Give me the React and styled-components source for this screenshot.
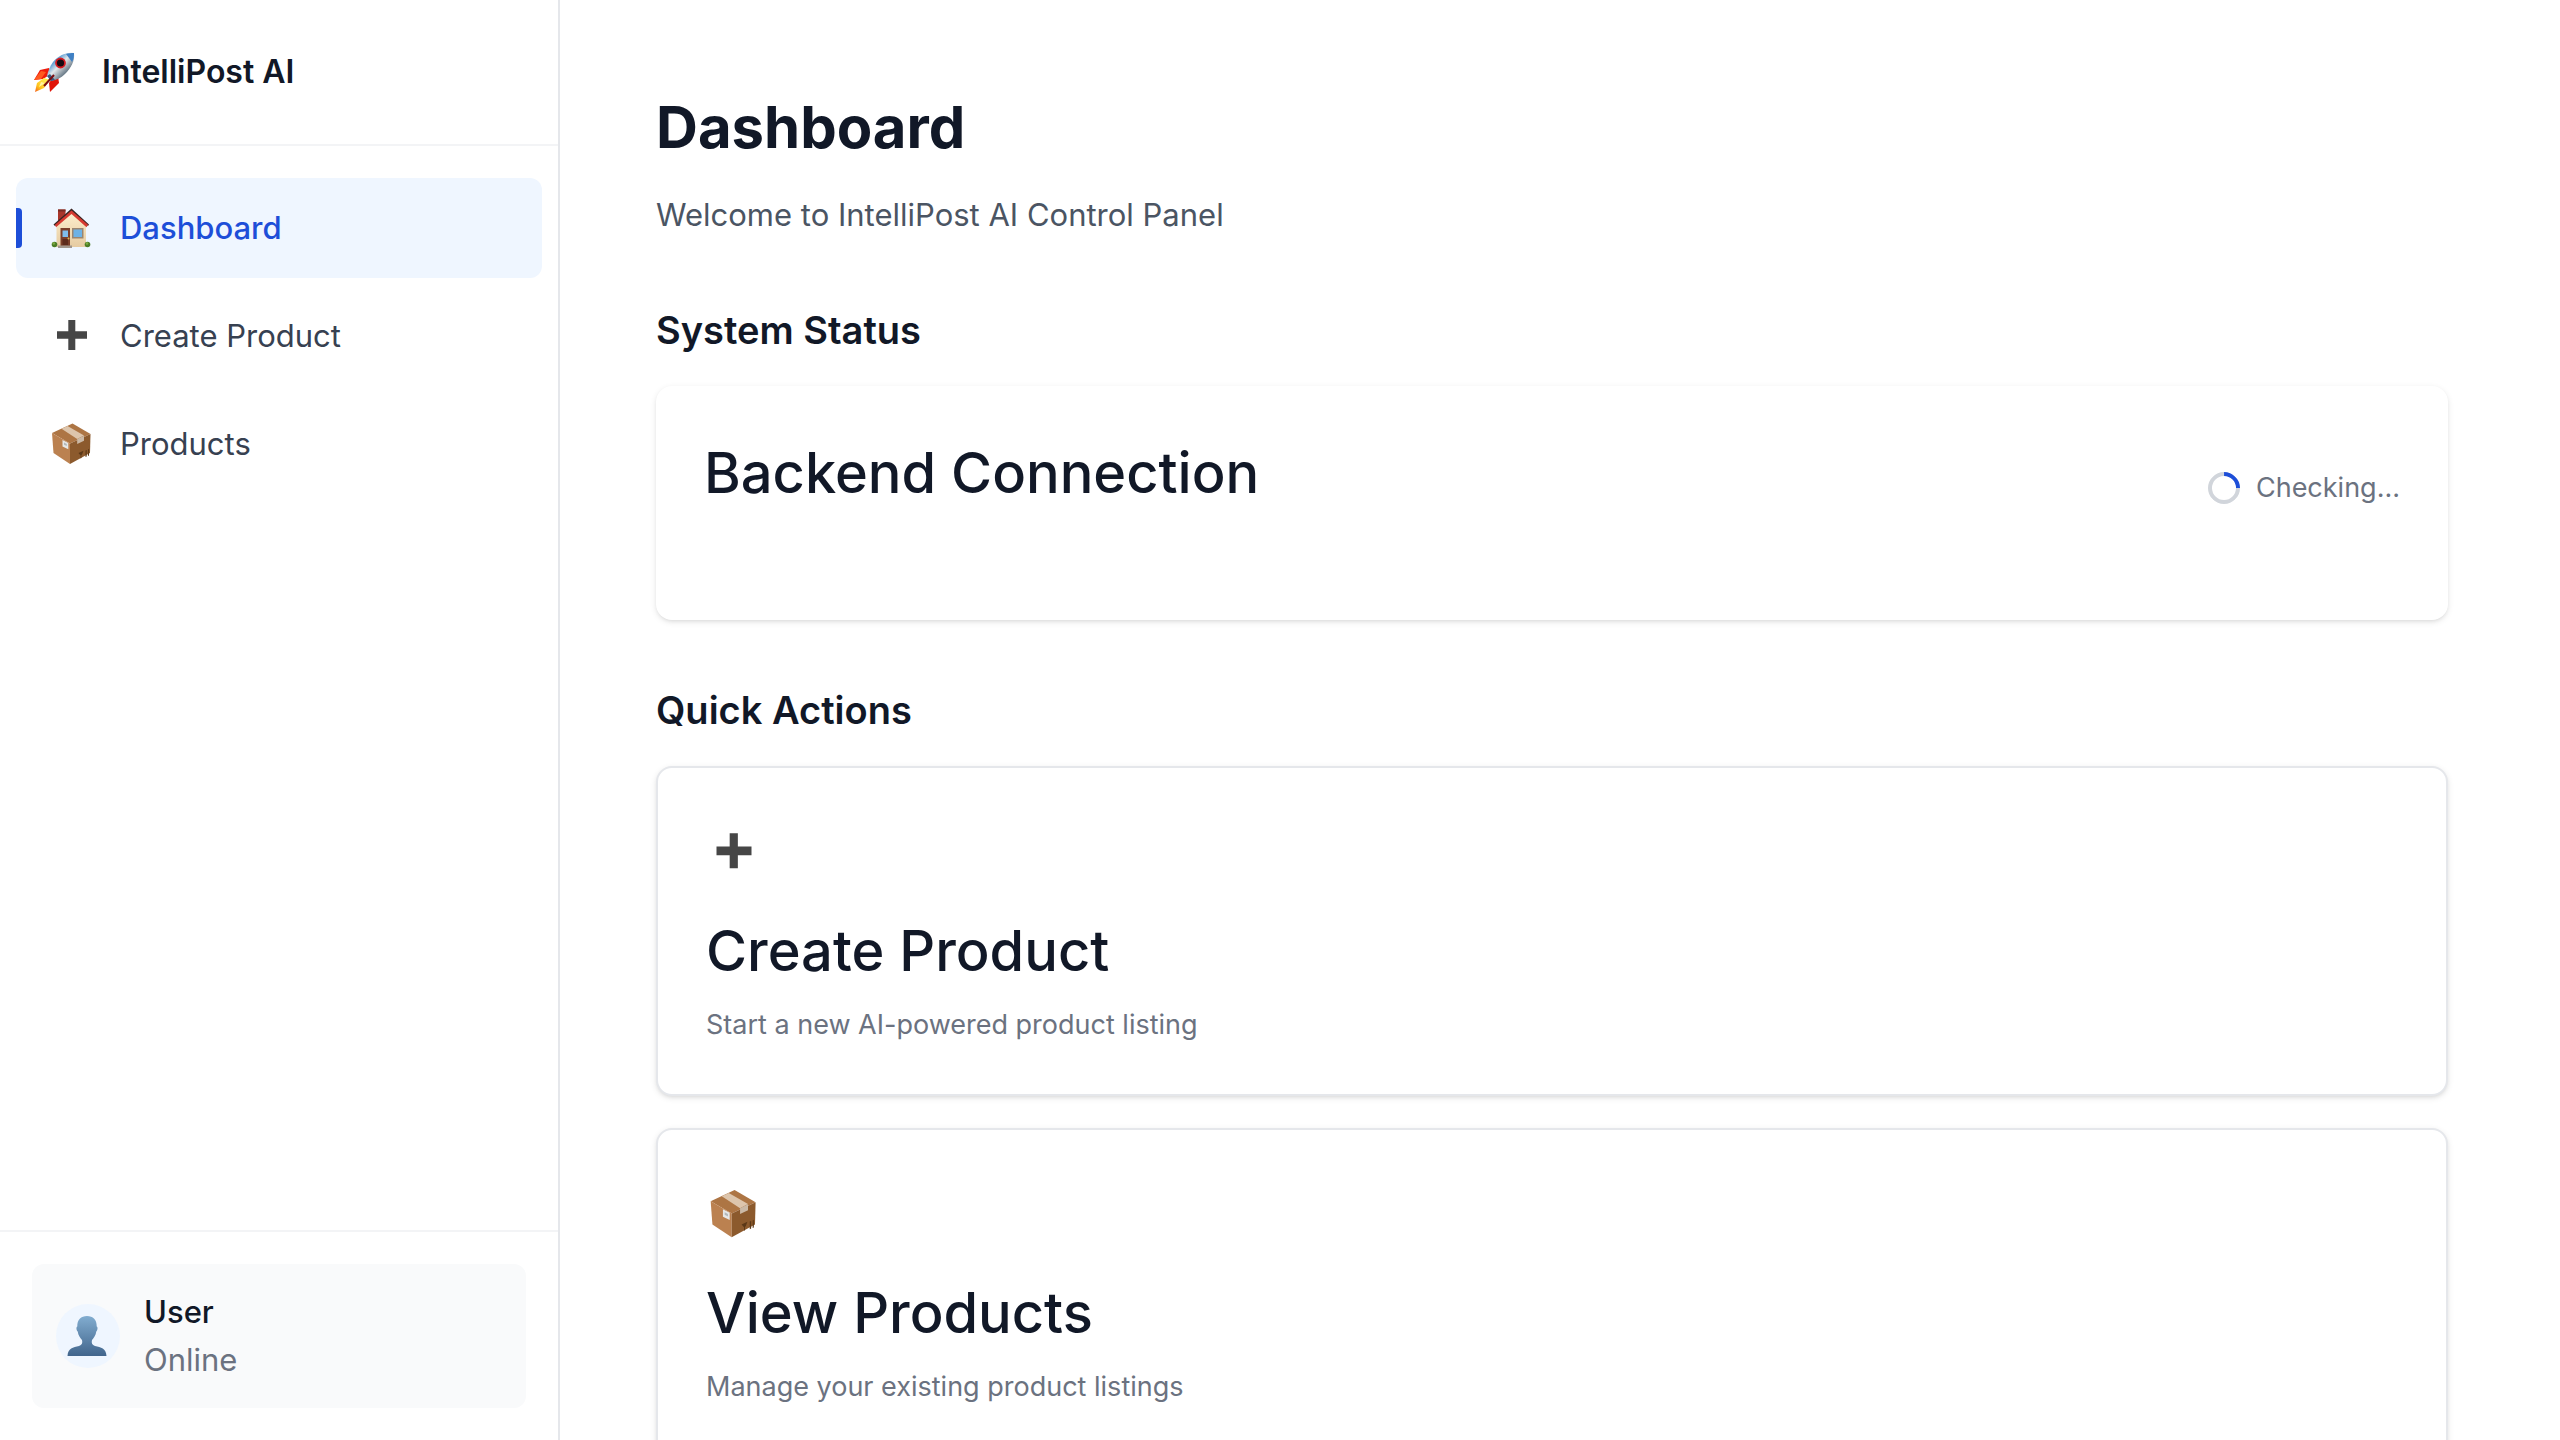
import React from "react";
import styled, { createGlobalStyle } from "styled-components";

const GlobalStyle = createGlobalStyle`
  *, *::before, *::after { box-sizing: border-box; }
  html, body, #root { height: 100%; }
  body {
    margin: 0;
    overflow: hidden;
    background: #ffffff;
    color: #111827;
    font-family: Inter, "Liberation Sans", sans-serif;
    font-size: 31px;
    line-height: 48px;
    -webkit-font-smoothing: antialiased;
  }
  h1, h2, h3, p { margin: 0; }
  a { color: inherit; text-decoration: none; }
`;

const Shell = styled.div`
  display: flex;
  height: 100vh;
`;

const Sidebar = styled.aside`
  display: flex;
  flex-direction: column;
  flex: 0 0 560px;
  border-right: 2px solid #e5e7eb;
`;

const Brand = styled.header`
  display: flex;
  align-items: center;
  gap: 26px;
  padding: 48px 32px;
  border-bottom: 2px solid #f3f4f6;
`;

const BrandName = styled.span`
  font-size: 32px;
  font-weight: 600;
`;

const Nav = styled.nav`
  display: flex;
  flex: 1;
  flex-direction: column;
  gap: 8px;
  padding: 32px 16px;
`;

const NavLink = styled.a`
  position: relative;
  display: flex;
  align-items: center;
  gap: 24px;
  padding: 25px 32px;
  border-radius: 12px;
  line-height: 50px;
  font-weight: ${(p) => (p.$active ? 500 : 400)};
  color: ${(p) => (p.$active ? "#1d4ed8" : "#374151")};
  background: ${(p) => (p.$active ? "#eff6ff" : "transparent")};

  &::before {
    content: "";
    display: ${(p) => (p.$active ? "block" : "none")};
    position: absolute;
    left: 0;
    top: 30px;
    width: 6px;
    height: 40px;
    border-radius: 0 4px 4px 0;
    background: #1d4ed8;
  }
`;

const SidebarFooter = styled.footer`
  padding: 32px;
  border-top: 2px solid #f3f4f6;
`;

const UserCard = styled.div`
  display: flex;
  align-items: center;
  gap: 24px;
  padding: 24px;
  border-radius: 12px;
  background: #f9fafb;
`;

const Avatar = styled.div`
  display: grid;
  place-items: center;
  width: 64px;
  height: 64px;
  border-radius: 50%;
  background: #eff6ff;
`;

const UserName = styled.p`
  font-weight: 500;
`;

const UserState = styled.p`
  color: #6b7280;
`;

const Main = styled.main`
  flex: 1;
  min-width: 0;
  overflow: hidden;
  padding: 96px 112px 96px 96px;
`;

const PageTitle = styled.h1`
  margin-bottom: 32px;
  font-size: 58px;
  font-weight: 700;
  line-height: 62px;
`;

const PageLead = styled.p`
  line-height: 50px;
  color: #4b5563;
`;

const Section = styled.section`
  margin-top: 64px;
`;

const SectionTitle = styled.h2`
  margin-bottom: 30px;
  font-size: 38px;
  font-weight: 600;
  line-height: 52px;
`;

const cardShadow = "0 2px 6px rgba(0, 0, 0, 0.1), 0 2px 4px -2px rgba(0, 0, 0, 0.1)";

const StatusCard = styled.div`
  padding: 48px;
  border-radius: 16px;
  background: #ffffff;
  box-shadow: ${cardShadow};
`;

const StatusRow = styled.div`
  display: flex;
  align-items: center;
  justify-content: space-between;
  margin-bottom: 30px;
`;

const CardTitle = styled.h3`
  margin-bottom: ${(p) => (p.$spacious ? "30px" : "14px")};
  font-size: 56px;
  font-weight: 500;
  line-height: 78px;
`;

const Checking = styled.div`
  display: flex;
  align-items: center;
  gap: 16px;
  font-size: 27px;
  line-height: 42px;
  color: #6b7280;
`;

const Spinner = styled.span`
  width: 32px;
  height: 32px;
  border: 4px solid #d1d5db;
  border-top-color: #1d4ed8;
  border-radius: 50%;
  transform: rotate(45deg);
`;

const ActionList = styled.div`
  display: grid;
  gap: 32px;
`;

const ActionCard = styled.a`
  display: block;
  padding: 48px;
  border: 2px solid #e5e7eb;
  border-radius: 16px;
  background: #ffffff;
  box-shadow: ${cardShadow};
`;

const ActionIcon = styled.div`
  display: flex;
  align-items: center;
  height: 72px;
  margin-bottom: 24px;
`;

const ActionText = styled.p`
  font-size: 27px;
  line-height: 42px;
  color: #6b7280;
`;

const Glyph = styled.svg`
  display: block;
  flex: none;
  width: ${(p) => p.$size}px;
  height: ${(p) => p.$size}px;
`;

function RocketIcon({ size }) {
  return (
    <Glyph $size={size} viewBox="0 0 44 44" aria-hidden="true">
      <defs>
        <linearGradient id="rocketBody" x1="14" y1="10" x2="30" y2="26" gradientUnits="userSpaceOnUse">
          <stop offset="0" stopColor="#2f6db0" />
          <stop offset="0.35" stopColor="#6fa9d8" />
          <stop offset="0.6" stopColor="#e4e8ea" />
          <stop offset="1" stopColor="#6f7f8c" />
        </linearGradient>
        <linearGradient id="rocketFlame" x1="12" y1="30" x2="3" y2="41" gradientUnits="userSpaceOnUse">
          <stop offset="0" stopColor="#ffe94a" />
          <stop offset="0.6" stopColor="#ffc21c" />
          <stop offset="1" stopColor="#f5681d" />
        </linearGradient>
      </defs>
      <path d="M17 18 8 20 2 30l9-1 8-5z" fill="#ee1c0c" />
      <path d="M2 30 9 21l5 1-5 7z" fill="#ff5a1f" />
      <path d="M26 26l1 7-9 9-1-9 5-7z" fill="#e01409" />
      <path d="M12 28 5 33 3 42l9-4 6-8z" fill="url(#rocketFlame)" />
      <path d="M9 32 7 37l6-4z" fill="#fff6a0" />
      <path d="M42 3c-8-1-16 3-21 9-3 4-5 9-6 14l4 5c5-1 10-3 14-7 6-6 10-13 9-21z" fill="url(#rocketBody)" />
      <path d="M42 3c-3 0-6 0-8 1l6 8c2-3 2-6 2-9z" fill="#3f80c4" />
      <path d="M15 26l4 5 4-1-5-6z" fill="#385a80" />
      <path d="M22 25 12 36" stroke="#7a0d12" strokeWidth="2" />
      <circle cx="28.500" cy="13" r="5.400" fill="#d51a22" />
      <circle cx="28.500" cy="13" r="3.600" fill="#170b12" />
    </Glyph>
  );
}

function HouseIcon({ size }) {
  return (
    <Glyph $size={size} viewBox="0 0 48 48" aria-hidden="true">
      <defs>
        <linearGradient id="houseWall" x1="0" y1="10" x2="0" y2="43" gradientUnits="userSpaceOnUse">
          <stop offset="0" stopColor="#fbedcb" />
          <stop offset="1" stopColor="#e6cba1" />
        </linearGradient>
      </defs>
      <path d="M10 5.500h7.500V13L10 20z" fill="#a8362b" />
      <path d="M10 5.500h7.500v2H10z" fill="#7a2a22" />
      <path d="M8.500 20 23.500 8l14.500 12v23H8.500z" fill="url(#houseWall)" />
      <path d="M5.500 20.500 23.500 4.500l17.500 16-1 1.500L23.500 8 7 22z" fill="#3a2422" />
      <path d="M7 20.800 23.500 6.500l16.500 14.300-1.500 2.400L23.500 10 8 23.200z" fill="#d63a30" />
      <path d="M12.500 24H22v19h-9.500z" fill="#7a3e29" />
      <path d="M14.500 26.500h5.500V33h-5.500z" fill="#7fbdeb" />
      <path d="M14.500 35h5.500v6h-5.500z" fill="#5c2b1c" />
      <circle cx="20.500" cy="34.500" r="1" fill="#e0b54a" />
      <path d="M24 24h11.500v10.500H24z" fill="#9a8670" />
      <path d="M25.500 25.500h8.500V33h-8.500z" fill="#6db2e5" />
      <path d="M10 41.500h14V44H10z" fill="#a1968c" />
      <circle cx="6.500" cy="40.500" r="2.800" fill="#4c7d27" />
      <circle cx="39.500" cy="40.500" r="2.800" fill="#4c7d27" />
      <circle cx="5.800" cy="39.500" r="1.300" fill="#7cab42" />
      <circle cx="39" cy="39.500" r="1.300" fill="#7cab42" />
    </Glyph>
  );
}

function PlusIcon({ size }) {
  return (
    <Glyph $size={size} viewBox="0 0 48 48" aria-hidden="true">
      <path d="M20.300 8h7v11.300H39v7.400H27.300V38h-7V26.700H9v-7.400h11.300z" fill="#464646" />
    </Glyph>
  );
}

function BoxIcon({ size }) {
  return (
    <Glyph $size={size} viewBox="0 0 48 48" aria-hidden="true">
      <path d="M4 13 24.500 3.500 42.500 14 22 23.500z" fill="#ad7544" />
      <path d="M4 13l18 10.500V44L5.500 33z" fill="#bb8150" />
      <path d="M22 23.500 42.500 14 42 33 22 44z" fill="#8c5a2d" />
      <path d="M13.500 8.700 19.500 6 36 15.500l-6.800 3.500z" fill="#ddc5ac" />
      <path d="M29.200 19 36 15.700v5L29.200 24z" fill="#cbb9a6" />
      <path d="M14.500 20l5.800 3v6.200l-5.800-2.800z" fill="#e6e8e8" />
      <path d="M16 22.500l2.800 1.400v2.200L16 24.700z" fill="#b3b8ba" />
      <path d="M30.500 33l5-2.300-1.500 4-.6.300v3l-.8.400v-3zM37.500 30.500l1.200-.5v6.500l-1.200.5zM40 29.500l1-.5v6.500l-1 .5z" fill="#5b3817" />
    </Glyph>
  );
}

function PersonIcon({ size }) {
  return (
    <Glyph $size={size} viewBox="0 0 48 48" aria-hidden="true">
      <defs>
        <linearGradient id="personFill" x1="0" y1="4" x2="0" y2="44" gradientUnits="userSpaceOnUse">
          <stop offset="0" stopColor="#82add0" />
          <stop offset="1" stopColor="#41658c" />
        </linearGradient>
      </defs>
      <path d="M23 4c6 0 10 4 9.700 10.500 1.300.5 1 4-.4 5-.6 4-2.300 6-4.300 8.500-.8 3 0 5 3 6 6 1.500 11 2 11.500 10H3.500c.5-8 5.500-8.500 11.500-10 3-1 3.800-3 3-6-2-2.500-3.700-4.500-4.300-8.500-1.400-1-1.700-4.500-.4-5C13 8 17 4 23 4z" fill="url(#personFill)" />
    </Glyph>
  );
}

const NAV_ITEMS = [
  { label: "Dashboard", Icon: HouseIcon, active: true },
  { label: "Create Product", Icon: PlusIcon },
  { label: "Products", Icon: BoxIcon },
];

const ACTIONS = [
  { title: "Create Product", text: "Start a new AI-powered product listing", Icon: PlusIcon },
  { title: "View Products", text: "Manage your existing product listings", Icon: BoxIcon },
];

export default function App() {
  return (
    <>
      <GlobalStyle />
      <Shell>
        <Sidebar>
          <Brand>
            <RocketIcon size={44} />
            <BrandName>IntelliPost AI</BrandName>
          </Brand>
          <Nav aria-label="Main">
            {NAV_ITEMS.map(({ label, Icon, active }) => (
              <NavLink key={label} href="#" $active={active} aria-current={active ? "page" : undefined}>
                <Icon size={48} />
                <span>{label}</span>
              </NavLink>
            ))}
          </Nav>
          <SidebarFooter>
            <UserCard>
              <Avatar>
                <PersonIcon size={48} />
              </Avatar>
              <div>
                <UserName>User</UserName>
                <UserState>Online</UserState>
              </div>
            </UserCard>
          </SidebarFooter>
        </Sidebar>
        <Main>
          <PageTitle>Dashboard</PageTitle>
          <PageLead>Welcome to IntelliPost AI Control Panel</PageLead>
          <Section>
            <SectionTitle>System Status</SectionTitle>
            <StatusCard>
              <StatusRow>
                <CardTitle $spacious>Backend Connection</CardTitle>
                <Checking role="status">
                  <Spinner />
                  <span>Checking...</span>
                </Checking>
              </StatusRow>
            </StatusCard>
          </Section>
          <Section>
            <SectionTitle>Quick Actions</SectionTitle>
            <ActionList>
              {ACTIONS.map(({ title, text, Icon }) => (
                <ActionCard key={title} href="#">
                  <ActionIcon>
                    <Icon size={56} />
                  </ActionIcon>
                  <CardTitle>{title}</CardTitle>
                  <ActionText>{text}</ActionText>
                </ActionCard>
              ))}
            </ActionList>
          </Section>
        </Main>
      </Shell>
    </>
  );
}
